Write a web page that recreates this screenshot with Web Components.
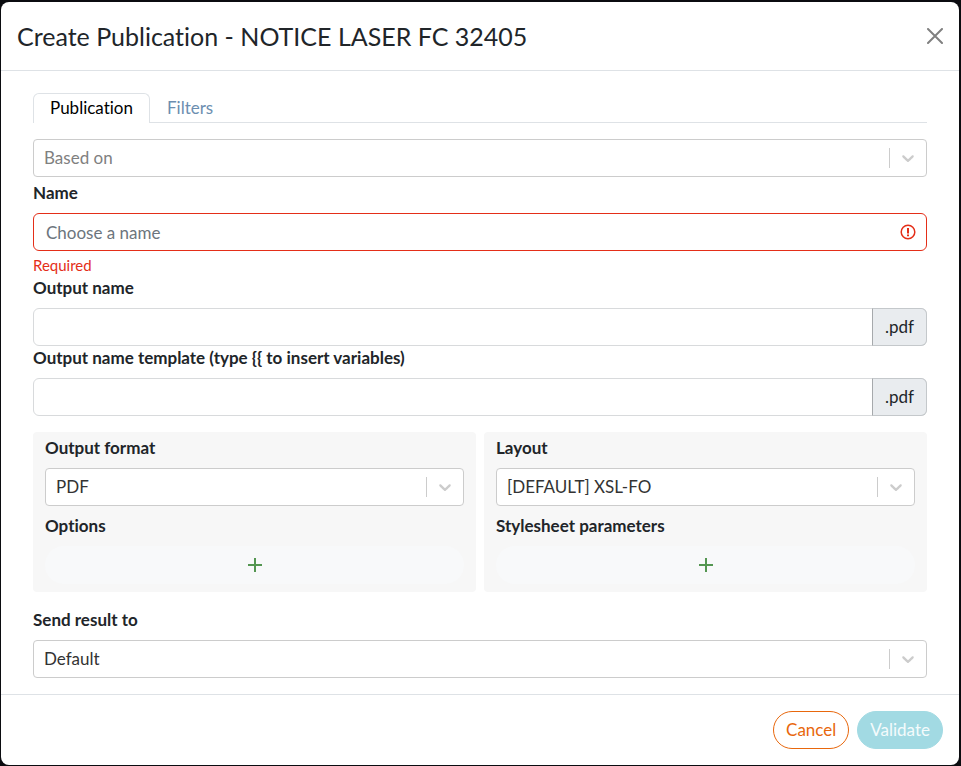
<!DOCTYPE html>
<html lang="en">
<head>
<meta charset="utf-8">
<title>Create Publication</title>
<style>
  body {
    margin: 0;
    padding: 2px 2px 1px 1px;
    background: #0b0c10;
    color: #212529;
    font: 17px/24px Lato, sans-serif;
    font-variant-ligatures: none;
  }
  .row { display: grid; grid-template-columns: 1fr 1fr; gap: 8px; margin: 16px 0; }
  .based { margin-bottom: 4px; }
</style>
</head>
<body>

<modal-dialog heading="Create Publication - NOTICE LASER FC 32405">
  <nav-tabs></nav-tabs>
  <select-field class="based" placeholder="Based on"></select-field>
  <text-field label="Name" placeholder="Choose a name" error="Required"></text-field>
  <text-field label="Output name" suffix=".pdf"></text-field>
  <text-field label="Output name template (type {{ to insert variables)" suffix=".pdf"></text-field>
  <div class="row">
    <option-panel label="Options">
      <select-field label="Output format" value="PDF"></select-field>
    </option-panel>
    <option-panel label="Stylesheet parameters">
      <select-field label="Layout" value="[DEFAULT] XSL-FO"></select-field>
    </option-panel>
  </div>
  <select-field label="Send result to" value="Default"></select-field>
  <pill-button slot="footer" variant="outline">Cancel</pill-button>
  <pill-button slot="footer" variant="primary" disabled>Validate</pill-button>
</modal-dialog>

<script>
// Shared by every field with a label above a control
const fieldStyles = `
  :host { display: block; }
  * { box-sizing: border-box; }
  label { display: block; margin-bottom: 8px; font-weight: 700; }
`;

class ModalDialog extends HTMLElement {
  constructor() {
    super();
    this.attachShadow({ mode: 'open' });
  }

  connectedCallback() {
    this.shadowRoot.innerHTML = `
      <style>
        :host { display: block; background: #fff; border-radius: 8px; }
        header {
          display: flex; align-items: center; justify-content: space-between;
          padding: 16px; border-bottom: 1px solid #dee2e6;
        }
        h2 { margin: 0; font-size: 25px; line-height: 36px; font-weight: 400; }
        .close { display: flex; padding: 0; border: 0; background: none; color: #808080; cursor: pointer; }
        main { padding: 22px 32px 16px; }
        footer {
          display: flex; justify-content: flex-end; gap: 8px;
          padding: 16px; border-top: 1px solid #dee2e6;
        }
      </style>
      <section role="dialog" aria-labelledby="title">
        <header>
          <h2 id="title">${this.getAttribute('heading')}</h2>
          <button class="close" type="button" aria-label="Close">
            <svg width="16" height="16" viewBox="0 0 16 16" fill="none" stroke="currentColor" stroke-width="2" stroke-linecap="round">
              <path d="M1 1l14 14M15 1L1 15"/>
            </svg>
          </button>
        </header>
        <main><slot></slot></main>
        <footer><slot name="footer"></slot></footer>
      </section>
    `;
  }
}

class NavTabs extends HTMLElement {
  constructor() {
    super();
    this.attachShadow({ mode: 'open' });
    this.shadowRoot.innerHTML = `
      <style>
        :host { display: block; margin-bottom: 16px; }
        nav { display: flex; border-bottom: 1px solid #dee2e6; }
        a {
          padding: 2px 16px; border: 1px solid transparent; border-bottom: 0;
          border-radius: 6px 6px 0 0; color: #6c8eb0; text-decoration: none;
        }
        /* the active tab covers the rule below it */
        a.active { margin-bottom: -1px; padding-bottom: 3px; border-color: #dee2e6; background: #fff; color: #000; }
      </style>
      <nav>
        <a class="active" href="#publication" aria-current="page">Publication</a>
        <a href="#filters">Filters</a>
      </nav>
    `;
  }
}

class SelectField extends HTMLElement {
  constructor() {
    super();
    this.attachShadow({ mode: 'open' });
  }

  connectedCallback() {
    const label = this.getAttribute('label');
    const placeholder = this.getAttribute('placeholder');
    const value = this.getAttribute('value') || placeholder;

    this.shadowRoot.innerHTML = `
      <style>
        ${fieldStyles}
        .control { display: grid; align-items: center; }
        select, .indicator { grid-area: 1 / 1; }
        select {
          appearance: none; width: 100%; height: 38px; padding: 0 46px 0 10px;
          border: 1px solid #ccc; border-radius: 4px; background: #fff; color: #333; font: inherit;
        }
        select.empty { color: #808080; }
        .indicator {
          justify-self: end; display: flex; padding: 0 9px 0 8px; border-left: 1px solid #ccc;
          color: #ccc; pointer-events: none;
        }
      </style>
      ${label ? `<label for="select">${label}</label>` : ''}
      <div class="control">
        <select id="select" class="${placeholder ? 'empty' : ''}" ${label ? '' : `aria-label="${placeholder}"`}>
          <option>${value}</option>
        </select>
        <span class="indicator">
          <svg width="20" height="20" viewBox="0 0 20 20" fill="currentColor" aria-hidden="true">
            <path d="M4.516 7.548c.436-.446 1.043-.481 1.576 0L10 11.295l3.908-3.747c.533-.481 1.141-.446 1.574 0 .436.445.408 1.197 0 1.615-.406.418-4.695 4.502-4.695 4.502-.217.223-.502.335-.787.335s-.57-.112-.789-.335c0 0-4.287-4.084-4.695-4.502s-.436-1.17 0-1.615z"/>
          </svg>
        </span>
      </div>
    `;
  }
}

class TextField extends HTMLElement {
  constructor() {
    super();
    this.attachShadow({ mode: 'open' });
  }

  connectedCallback() {
    const suffix = this.getAttribute('suffix');
    const error = this.getAttribute('error');
    const placeholder = this.getAttribute('placeholder') || '';

    this.shadowRoot.innerHTML = `
      <style>
        ${fieldStyles}
        .control {
          display: flex; align-items: center; height: 38px;
          border: 1px solid #d8dadc; border-radius: 6px; background: #fff;
        }
        .control.invalid { border-color: #e42e18; }
        input {
          flex: 1; min-width: 0; height: 100%; padding: 0 12px;
          border: 0; border-radius: 6px; outline: 0; background: none; color: inherit; font: inherit;
        }
        input::placeholder { color: #6c757d; opacity: 1; }
        .suffix {
          align-self: stretch; margin: -1px; padding: 6px 12px;
          border: 1px solid #c4c8cb; border-left-color: #a6a9ac; border-radius: 0 6px 6px 0; background: #e9ecef;
        }
        .icon { margin-right: 9px; }
        .error { margin-top: 4px; color: #e42e18; font-size: 15px; line-height: 21px; }
      </style>
      <label for="input">${this.getAttribute('label')}</label>
      <div class="control ${error ? 'invalid' : ''}">
        <input id="input" type="text" placeholder="${placeholder}" ${error ? 'aria-invalid="true" aria-describedby="error"' : ''}>
        ${error ? `
          <svg class="icon" width="18" height="18" viewBox="0 0 18 18" fill="none" stroke="#e42e18" aria-hidden="true">
            <circle cx="9" cy="9" r="6.8" stroke-width="1.5"/>
            <path d="M9 5v5.4M9 11.4v1.8" stroke-width="2"/>
          </svg>` : ''}
        ${suffix ? `<span class="suffix">${suffix}</span>` : ''}
      </div>
      ${error ? `<div class="error" id="error">${error}</div>` : ''}
    `;
  }
}

class OptionPanel extends HTMLElement {
  constructor() {
    super();
    this.attachShadow({ mode: 'open' });
  }

  connectedCallback() {
    this.shadowRoot.innerHTML = `
      <style>
        ${fieldStyles}
        :host { padding: 4px 12px 8px; border-radius: 4px; background: #f7f7f7; }
        label { margin-top: 8px; }
        button {
          display: flex; align-items: center; justify-content: center; width: 100%; height: 38px;
          border: 0; border-radius: 19px; background: #f8f9fa; color: #549651; cursor: pointer;
        }
      </style>
      <slot></slot>
      <label for="add">${this.getAttribute('label')}</label>
      <button id="add" type="button">
        <svg width="14" height="14" viewBox="0 0 14 14" fill="none" stroke="currentColor" stroke-width="2" aria-hidden="true">
          <path d="M7 0v14M0 7h14"/>
        </svg>
      </button>
    `;
  }
}

class PillButton extends HTMLElement {
  constructor() {
    super();
    this.attachShadow({ mode: 'open' });
  }

  connectedCallback() {
    this.shadowRoot.innerHTML = `
      <style>
        :host { display: block; }
        button {
          display: block; padding: 6px 12px; border: 1px solid; border-radius: 19px;
          font: inherit; font-variant-ligatures: none; cursor: pointer;
        }
        .outline { border-color: #e8670c; background: #fff; color: #e8670c; }
        .primary { border-color: #a2dae3; background: #a2dae3; color: #f4fbfc; }
      </style>
      <button type="button" class="${this.getAttribute('variant')}" ${this.hasAttribute('disabled') ? 'disabled' : ''}><slot></slot></button>
    `;
  }
}

customElements.define('modal-dialog', ModalDialog);
customElements.define('nav-tabs', NavTabs);
customElements.define('select-field', SelectField);
customElements.define('text-field', TextField);
customElements.define('option-panel', OptionPanel);
customElements.define('pill-button', PillButton);
</script>
</body>
</html>
